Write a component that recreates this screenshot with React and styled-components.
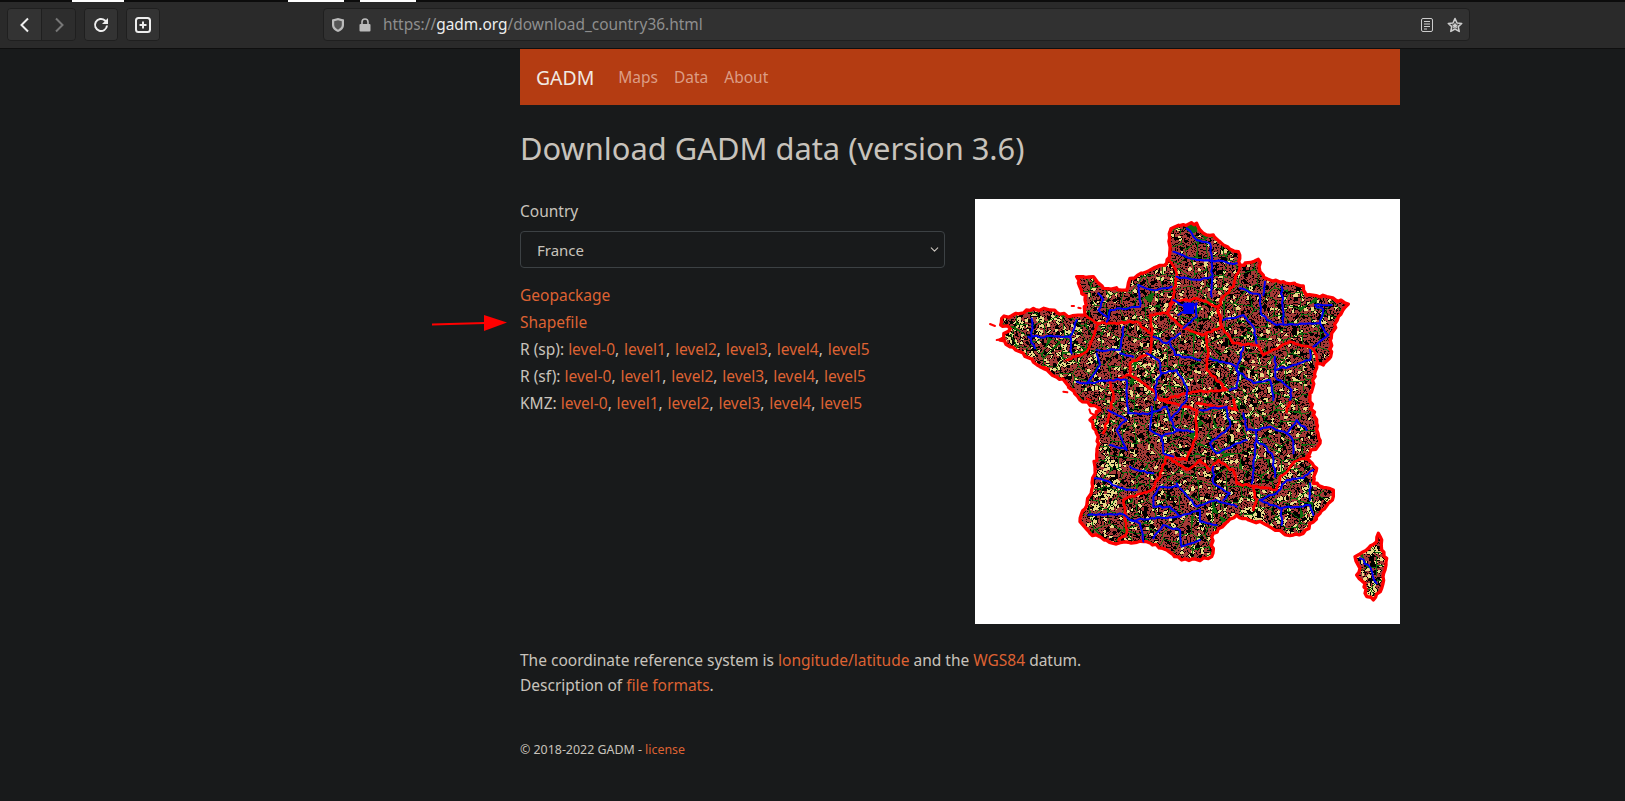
import React from "react";
import styled, { createGlobalStyle } from "styled-components";
import { ChevronDown } from "lucide-react";

const GlobalStyle = createGlobalStyle`
  html, body {
    margin: 0;
    padding: 0;
    background: #181a1b;
  }
  * {
    box-sizing: border-box;
  }
`;

const Page = styled.div`
  width: 1625px;
  height: 801px;
  overflow: hidden;
  background: #181a1b;
  color: #c8c3bc;
  font-family: "Noto Sans", "Open Sans", sans-serif;
  font-size: 15.5px;
  line-height: 27px;
`;

/* browser chrome */
const TabStrip = styled.div`
  display: flex;
  height: 2px;
  background: #0c0c0c;
  padding-left: 72px;
`;

const TabMark = styled.span`
  width: ${(props) => props.$w}px;
  margin-right: ${(props) => props.$gap}px;
  background: #fff;
`;

const Toolbar = styled.div`
  display: flex;
  align-items: center;
  height: 47px;
  padding: 0 7px 1px;
  background: #2a2a2a;
  border-bottom: 1px solid #0f0f0f;
`;

const ButtonGroup = styled.div`
  display: flex;
  height: 33px;
  margin-right: ${(props) => props.$mr}px;
  border: 1px solid #1f1f1f;
  border-radius: 4px;
  overflow: hidden;
`;

const ToolButton = styled.div`
  display: flex;
  align-items: center;
  justify-content: center;
  width: ${(props) => props.$w}px;
  height: 100%;
  background: ${(props) => (props.$off ? "#2d2d2d" : "#333")};
  border-left: ${(props) => (props.$split ? "1px solid #1f1f1f" : "none")};
`;

const UrlBar = styled.div`
  display: flex;
  align-items: center;
  width: 1147px;
  height: 33px;
  padding: 0 6px 0 7px;
  background: #313131;
  border: 1px solid #1f1f1f;
  border-radius: 4px;
  font-size: 15.45px;
  color: #8e8e8e;
`;

const UrlIcon = styled.svg`
  flex: none;
  margin-right: ${(props) => props.$mr}px;
`;

const UrlHost = styled.span`
  color: #eee;
`;

const UrlText = styled.div`
  flex: 1;
  white-space: nowrap;
`;

/* page */
const Main = styled.main`
  width: 880px;
  margin-left: 520px;
`;

const NavBar = styled.nav`
  display: flex;
  align-items: center;
  height: 56px;
  padding-left: 16px;
  background: #b43c12;
`;

const Brand = styled.span`
  margin-right: 24px;
  font-size: 19.4px;
  color: #f0e9e2;
`;

const NavLink = styled.a`
  margin-right: 16px;
  color: #dc9d85;
`;

const Title = styled.h1`
  margin: 24px 0 32px;
  font-size: 30.85px;
  font-weight: 400;
  line-height: 38px;
  white-space: nowrap;
`;

const Row = styled.div`
  display: flex;
  gap: 30px;
`;

const LeftColumn = styled.div`
  position: relative;
  width: 425px;
`;

const Label = styled.label`
  display: block;
  margin: -1px 0 7px;
  line-height: 26px;
`;

const SelectBox = styled.div`
  position: relative;
  margin-bottom: 14px;
`;

const Select = styled.select`
  display: block;
  width: 100%;
  height: 37px;
  padding: 2px 16px 0;
  appearance: none;
  background: #181a1b;
  color: #c8c3bc;
  font: inherit;
  font-size: 15px;
  border: 1px solid #3c4144;
  border-radius: 4px;
`;

const SelectArrow = styled(ChevronDown)`
  position: absolute;
  top: 12px;
  right: 4px;
  color: #c8c3bc;
`;

const Line = styled.div`
  white-space: nowrap;
`;

const LevelList = styled.span`
  word-spacing: 0.8px;
`;

const Link = styled.a`
  color: #dd6233;
`;

const Pointer = styled.svg`
  position: absolute;
  top: 114px;
  left: -90px;
`;

const MapFrame = styled.div`
  flex: none;
  width: 425px;
  height: 425px;
  background: #fff;
`;

const Notes = styled.p`
  margin: 24px 0 0;
  line-height: 25px;
  white-space: nowrap;
`;

const Footer = styled.footer`
  margin-top: 41px;
  font-size: 12.4px;
  line-height: 22px;
`;

/* map drawing, coordinates are in thirds of a pixel */
const hash = (a, b) => {
  const s = Math.sin(a * 127.1 + b * 311.7) * 43758.5453;
  return s - Math.floor(s);
};

// borders in the source image are jagged, so break every segment up and shake it
const roughen = (pts, amount, closed) => {
  const out = [];
  const list = closed ? [...pts, pts[0]] : pts;
  for (let i = 0; i < list.length - 1; i++) {
    const [ax, ay] = list[i];
    const [bx, by] = list[i + 1];
    const n = Math.max(1, Math.round(Math.hypot(bx - ax, by - ay) / 11));
    for (let k = 0; k < n; k++) {
      const t = k / n;
      const jx = k === 0 ? 0 : (hash(ax + k, by) - 0.5) * amount;
      const jy = k === 0 ? 0 : (hash(ay, bx + k) - 0.5) * amount;
      out.push([ax + (bx - ax) * t + jx, ay + (by - ay) * t + jy]);
    }
  }
  if (!closed) out.push(list[list.length - 1]);
  return out;
};

const toPath = (pts) =>
  pts.map((p, i) => (i ? "L" : "M") + p[0].toFixed(1) + " " + p[1].toFixed(1)).join("");

const FRANCE = [
  [600, 95], [612, 82], [640, 74], [680, 70], [700, 100], [730, 105], [760, 135], [805, 155], [810, 195], [850, 185],
  [865, 178], [870, 215], [900, 240], [940, 245], [1000, 258], [1010, 285], [1070, 290], [1135, 312], [1105, 350],
  [1085, 400], [1082, 470], [1060, 495], [1040, 490], [1020, 605], [1040, 670], [1050, 730], [1010, 770], [1040, 805],
  [1030, 850], [1090, 870], [1090, 890], [1050, 940], [1000, 1000], [970, 1005], [940, 1000], [880, 970], [850, 965],
  [800, 945], [730, 1000], [725, 1070], [690, 1082], [635, 1080], [590, 1050], [530, 1025], [430, 1030], [360, 1000],
  [330, 965], [365, 870], [375, 800], [385, 710], [360, 660], [390, 630], [330, 600], [285, 545], [210, 500], [150, 455],
  [90, 420], [120, 385], [92, 375], [95, 355], [190, 325], [240, 330], [300, 350], [345, 345], [345, 300], [320, 230],
  [370, 230], [400, 265], [470, 270], [480, 235], [590, 190], [600, 150],
];

const CORSICA = [
  [1225, 1000], [1235, 1020], [1235, 1050], [1250, 1075], [1245, 1110], [1235, 1165], [1210, 1200], [1185, 1180],
  [1185, 1150], [1160, 1125], [1170, 1105], [1155, 1070], [1195, 1045], [1220, 1025],
];

const ISLETS = [
  [[60, 372], [75, 378]], [[80, 420], [100, 422]], [[215, 500], [235, 507]], [[280, 575], [292, 577]],
  [[305, 318], [312, 318]], [[325, 323], [332, 325]], [[358, 628], [375, 655]], [[350, 595], [362, 600]],
];

const RED_LINES = [
  [[595, 180], [620, 220], [610, 290], [590, 340], [540, 345], [545, 400], [540, 460], [480, 490], [480, 525], [420, 545], [430, 600], [400, 700]],
  [[810, 195], [790, 260], [760, 290], [745, 320], [755, 380], [790, 430], [860, 435], [880, 465], [960, 425], [1030, 445], [1045, 490]],
  [[600, 310], [680, 295], [745, 320], [755, 380], [700, 405], [640, 385], [590, 340]],
  [[345, 345], [385, 370], [500, 365], [540, 400]],
  [[385, 370], [350, 455], [290, 480]],
  [[710, 405], [715, 460], [710, 510], [770, 570], [680, 575], [570, 600]],
  [[480, 525], [550, 570], [570, 600], [680, 630], [680, 700], [650, 780], [590, 770], [570, 830], [545, 870], [460, 900], [470, 1000], [445, 1020]],
  [[590, 770], [650, 810], [690, 780], [720, 810], [745, 780], [790, 810], [800, 850], [850, 860], [920, 870], [930, 830], [985, 780], [1020, 770]],
  [[850, 860], [860, 900], [850, 930]],
  [[790, 600], [800, 630], [680, 610]],
  [[960, 600], [950, 635]],
];

const BLUE_LINES = [
  [[650, 85], [680, 120], [720, 130], [725, 185]],
  [[610, 155], [660, 175], [800, 190]],
  [[725, 190], [725, 290]],
  [[620, 230], [690, 240], [725, 230]],
  [[505, 255], [550, 270], [605, 260]],
  [[505, 255], [510, 320], [420, 330], [410, 365]],
  [[385, 280], [400, 300], [385, 330], [410, 350]],
  [[185, 355], [185, 410], [300, 410], [320, 360]],
  [[175, 410], [195, 445]],
  [[300, 410], [305, 460]],
  [[460, 380], [450, 450], [380, 450]],
  [[450, 460], [490, 470]],
  [[380, 460], [390, 495], [370, 525], [350, 550], [320, 545]],
  [[350, 550], [420, 540], [470, 540], [475, 640], [490, 640], [540, 640], [590, 620]],
  [[610, 300], [655, 325], [680, 310], [680, 350], [640, 385]],
  [[655, 325], [625, 345]],
  [[760, 360], [820, 345], [850, 380], [860, 430]],
  [[810, 265], [870, 285], [875, 345], [920, 375], [1050, 370], [1060, 330], [1035, 315], [1085, 315]],
  [[885, 245], [880, 285]],
  [[935, 260], [940, 370]],
  [[1050, 370], [1075, 405], [1030, 440]],
  [[550, 410], [590, 430], [630, 400]],
  [[600, 430], [615, 465], [690, 480]],
  [[530, 460], [565, 480], [575, 520], [560, 540], [555, 600]],
  [[575, 520], [620, 510], [650, 560], [650, 600], [600, 660]],
  [[720, 475], [790, 495], [805, 520], [800, 565], [780, 570]],
  [[820, 440], [800, 510], [850, 550], [900, 540], [910, 600]],
  [[915, 470], [915, 530], [965, 570], [960, 600]],
  [[915, 510], [1020, 480], [1020, 450]],
  [[415, 630], [470, 660], [440, 690], [470, 750], [420, 735]],
  [[545, 620], [540, 690], [575, 710], [630, 690], [670, 695]],
  [[590, 620], [610, 680], [630, 690]],
  [[575, 710], [580, 760], [610, 770]],
  [[690, 630], [770, 620], [780, 680], [720, 730], [740, 760], [800, 730], [830, 720]],
  [[820, 640], [830, 690], [860, 690], [850, 800], [845, 850]],
  [[860, 690], [900, 680], [950, 700], [970, 725], [970, 760]],
  [[950, 700], [980, 660], [1010, 690]],
  [[860, 720], [905, 760], [915, 830]],
  [[480, 800], [500, 810], [550, 820]],
  [[375, 835], [400, 840], [470, 870], [500, 870]],
  [[355, 945], [450, 940], [480, 960], [510, 970], [520, 1025]],
  [[480, 960], [620, 950], [690, 930], [690, 965], [740, 975]],
  [[620, 850], [625, 860], [570, 860], [550, 890], [550, 920], [600, 920], [630, 950]],
  [[630, 865], [680, 920], [740, 900], [800, 920]],
  [[730, 800], [730, 850], [780, 880], [760, 900]],
  [[550, 1015], [580, 975], [630, 990], [635, 1040], [690, 1020]],
  [[1030, 810], [1000, 835], [950, 840], [920, 880], [870, 900], [930, 925], [1020, 915], [1030, 945]],
  [[1020, 850], [1020, 900]],
  [[935, 925], [935, 975]],
  [[1170, 1075], [1195, 1095], [1220, 1150]],
];

// nearest and second nearest distance on a jittered grid, used for the commune pattern
const voronoi = (x, y, size, seed) => {
  const gx = Math.floor(x / size);
  const gy = Math.floor(y / size);
  let d1 = 1e9;
  let d2 = 1e9;
  let id = 0;
  for (let i = gx - 1; i <= gx + 1; i++) {
    for (let j = gy - 1; j <= gy + 1; j++) {
      const px = (i + hash(i * 1.13 + seed, j * 0.77)) * size;
      const py = (j + hash(j * 1.31 + seed + 0.4, i * 0.59 + 7)) * size;
      const d = Math.hypot(px - x, py - y);
      if (d < d1) {
        d2 = d1;
        d1 = d;
        id = hash(i * 0.91 + 31, j * 1.07 + seed);
      } else if (d < d2) {
        d2 = d;
      }
    }
  }
  return { d1, edge: d2 - d1, id };
};

// the west coast, the Landes, the Alps and Corsica hold more pale cells
const paleShare = (x, y) => {
  if (x < 330 && y < 500) return 0.34;
  if (x < 440 && y > 740 && y < 930) return 0.55;
  if (x > 820 && y > 920 && y < 960 && x < 880) return 0.85;
  if (x > 920 && y > 780) return 0.36;
  if (x > 1150) return 0.4;
  if (x > 480 && x < 640 && y > 460 && y < 580) return 0.3;
  return 0.15;
};

const buildTexture = () => {
  const paths = { brown: [], pale: [], green: [] };
  const step = 3;
  for (let y = 60; y < 1210; y += step) {
    let kind = null;
    let start = 0;
    const flush = (x) => {
      if (kind) paths[kind].push(`M${start} ${y}H${x}V${y + step}H${start}Z`);
    };
    for (let x = 54; x < 1260; x += step) {
      const canton = voronoi(x, y, 45, 3);
      const blob = voronoi(x, y, 38, 19);
      const commune = voronoi(x, y, 10, 11);
      let next = null;
      if (canton.edge < 2.2 && canton.d1 > 6) next = "green";
      else if (blob.d1 > 5 && commune.edge > 1.1) {
        const p = paleShare(x, y);
        if (commune.id < p) next = "pale";
        else if (commune.id < 0.94) next = "brown";
      }
      if (next !== kind) {
        flush(x);
        kind = next;
        start = x;
      }
    }
    flush(1260);
  }
  return { brown: paths.brown.join(""), pale: paths.pale.join(""), green: paths.green.join("") };
};

const TEXTURE = buildTexture();
const LAND = toPath(roughen(FRANCE, 9, true)) + "Z" + toPath(roughen(CORSICA, 7, true)) + "Z";

const FranceMap = () => (
  <svg width="425" height="425" viewBox="15 -3 1275 1275" strokeLinejoin="round" strokeLinecap="round" fill="none">
    <defs>
      <clipPath id="land">
        <path d={LAND} />
      </clipPath>
    </defs>
    <path d={LAND} fill="#000" />
    <g clipPath="url(#land)" shapeRendering="crispEdges">
      <path d={TEXTURE.brown} fill="#a53a38" />
      <path d={TEXTURE.pale} fill="#e8d888" />
      <path d={TEXTURE.green} fill="#0f6a0f" />
    </g>
    <path d={LAND} stroke="#f00" strokeWidth="10" />
    {ISLETS.map((pts, i) => (
      <path key={i} d={toPath(roughen(pts, 6))} stroke="#f00" strokeWidth="6" />
    ))}
    {RED_LINES.map((pts, i) => (
      <path key={i} d={toPath(roughen(pts, 7))} stroke="#f00" strokeWidth="8" />
    ))}
    {BLUE_LINES.map((pts, i) => (
      <path key={i} d={toPath(roughen(pts, 6))} stroke="#0000f4" strokeWidth="6" />
    ))}
    <path d="M640 308h32v34h-32z" fill="#0000f4" />
  </svg>
);

const LEVELS = ["level-0", "level1", "level2", "level3", "level4", "level5"];

const LevelLine = ({ label }) => (
  <Line>
    {label}:{" "}
    <LevelList>
      {LEVELS.map((level, i) => (
        <React.Fragment key={level}>
          <Link>{level}</Link>
          {i < LEVELS.length - 1 ? ", " : ""}
        </React.Fragment>
      ))}
    </LevelList>
  </Line>
);

const App = () => (
  <Page>
    <GlobalStyle />
    <TabStrip>
      <TabMark $w={52} $gap={164} />
      <TabMark $w={56} $gap={16} />
      <TabMark $w={56} $gap={0} />
    </TabStrip>
    <Toolbar>
      <ButtonGroup $mr={8}>
        <ToolButton $w={33}>
          <svg width="16" height="16" viewBox="0 0 16 16" fill="none" stroke="#eee" strokeWidth="2">
            <path d="M11 1.5 4.5 8l6.5 6.5" />
          </svg>
        </ToolButton>
        <ToolButton $w={34} $off $split>
          <svg width="16" height="16" viewBox="0 0 16 16" fill="none" stroke="#777" strokeWidth="2">
            <path d="M5 1.5 11.5 8 5 14.5" />
          </svg>
        </ToolButton>
      </ButtonGroup>
      <ButtonGroup $mr={8}>
        <ToolButton $w={32}>
          <svg width="18" height="18" viewBox="0 0 18 18" fill="none" stroke="#eee" strokeWidth="2">
            <path d="M15 9.5A6 6 0 1 1 13 4.5L15 6.5" />
            <path d="M16 2v6h-6z" fill="#eee" stroke="none" />
          </svg>
        </ToolButton>
      </ButtonGroup>
      <ButtonGroup $mr={163}>
        <ToolButton $w={32}>
          <svg width="18" height="18" viewBox="0 0 18 18" fill="none" stroke="#eee" strokeWidth="2">
            <rect x="2" y="2" width="14" height="14" rx="2.5" />
            <path d="M9 5.5v7M5.5 9h7" />
          </svg>
        </ToolButton>
      </ButtonGroup>
      <UrlBar>
        <UrlIcon $mr={13} width="14" height="14" viewBox="0 0 14 14">
          <path d="M1 1.5 7 0l6 1.5V7c0 3.5-3 6-6 7-3-1-6-3.5-6-7z" fill="#bbb" />
          <path d="M3.2 3.2 7 2.3l3.8.9V7c0 2-2 3.8-3.8 4.7C5.200 10.800 3.200 9 3.200 7z" fill="#555" />
        </UrlIcon>
        <UrlIcon $mr={11} width="14" height="14" viewBox="0 0 14 14">
          <path d="M4 6V4a3 3 0 0 1 6 0v2" fill="none" stroke="#bbb" strokeWidth="1.6" />
          <rect x="1.5" y="6" width="11" height="7.5" rx="1" fill="#bbb" />
        </UrlIcon>
        <UrlText>
          https://<UrlHost>gadm.org</UrlHost>/download_country36.html
        </UrlText>
        <UrlIcon $mr={13} width="14" height="14" viewBox="0 0 14 14" fill="none" stroke="#ccc">
          <rect x="1.5" y="0.5" width="11" height="13" rx="1.5" />
          <path d="M4 3.5h6M4 6h6M4 8.5h6M4 11h3" />
        </UrlIcon>
        <UrlIcon $mr={0} width="16" height="16" viewBox="0 0 16 16" fill="#ccc" stroke="#ccc" strokeWidth="1.6" strokeLinejoin="round">
          <path d="M8 1.5 10 6l4.7.5-3.5 3.2 1 4.700L8 12l-4.200 2.400 1-4.700L1.300 6.500 6 6z" fill="none" />
          <path d="M8 5.5 9 7.600l2.200.2-1.600 1.500.5 2.200L8 10.400l-2.100 1.100.5-2.200-1.600-1.500L7 7.600z" stroke="none" />
        </UrlIcon>
      </UrlBar>
    </Toolbar>
    <Main>
      <NavBar>
        <Brand>GADM</Brand>
        <NavLink>Maps</NavLink>
        <NavLink>Data</NavLink>
        <NavLink>About</NavLink>
      </NavBar>
      <Title>Download GADM data (version 3.6)</Title>
      <Row>
        <LeftColumn>
          <Label>Country</Label>
          <SelectBox>
            <Select defaultValue="France">
              <option>France</option>
            </Select>
            <SelectArrow size={13} strokeWidth={2} />
          </SelectBox>
          <Line>
            <Link>Geopackage</Link>
          </Line>
          <Line>
            <Link>Shapefile</Link>
          </Line>
          <LevelLine label="R (sp)" />
          <LevelLine label="R (sf)" />
          <LevelLine label="KMZ" />
          <Pointer width="78" height="20" viewBox="0 0 78 20">
            <path d="M2 11.5 55 10" stroke="#f00" strokeWidth="2" />
            <path d="M54 2 77 9.5 54 18z" fill="#f00" />
          </Pointer>
        </LeftColumn>
        <MapFrame>
          <FranceMap />
        </MapFrame>
      </Row>
      <Notes>
        The coordinate reference system is <Link>longitude/latitude</Link> and the <Link>WGS84</Link> datum.
        <br />
        Description of <Link>file formats</Link>.
      </Notes>
      <Footer>
        © 2018-2022 GADM - <Link>license</Link>
      </Footer>
    </Main>
  </Page>
);

export default App;
